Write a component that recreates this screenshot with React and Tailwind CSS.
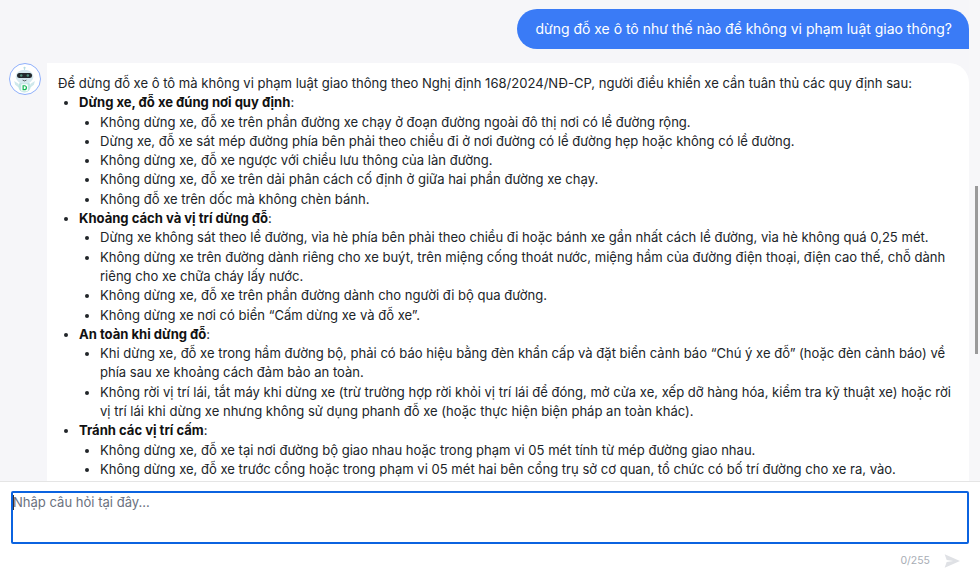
import React from 'react'

const sections = [
  {
    title: 'Dừng xe, đỗ xe đúng nơi quy định',
    items: [
      'Không dừng xe, đỗ xe trên phần đường xe chạy ở đoạn đường ngoài đô thị nơi có lề đường rộng.',
      'Dừng xe, đỗ xe sát mép đường phía bên phải theo chiều đi ở nơi đường có lề đường hẹp hoặc không có lề đường.',
      'Không dừng xe, đỗ xe ngược với chiều lưu thông của làn đường.',
      'Không dừng xe, đỗ xe trên dải phân cách cố định ở giữa hai phần đường xe chạy.',
      'Không đỗ xe trên dốc mà không chèn bánh.',
    ],
  },
  {
    title: 'Khoảng cách và vị trí dừng đỗ',
    items: [
      'Dừng xe không sát theo lề đường, vỉa hè phía bên phải theo chiều đi hoặc bánh xe gần nhất cách lề đường, vỉa hè không quá 0,25 mét.',
      'Không dừng xe trên đường dành riêng cho xe buýt, trên miệng cống thoát nước, miệng hầm của đường điện thoại, điện cao thế, chỗ dành riêng cho xe chữa cháy lấy nước.',
      'Không dừng xe, đỗ xe trên phần đường dành cho người đi bộ qua đường.',
      'Không dừng xe nơi có biển “Cấm dừng xe và đỗ xe”.',
    ],
  },
  {
    title: 'An toàn khi dừng đỗ',
    items: [
      'Khi dừng xe, đỗ xe trong hầm đường bộ, phải có báo hiệu bằng đèn khẩn cấp và đặt biển cảnh báo “Chú ý xe đỗ” (hoặc đèn cảnh báo) về phía sau xe khoảng cách đảm bảo an toàn.',
      'Không rời vị trí lái, tắt máy khi dừng xe (trừ trường hợp rời khỏi vị trí lái để đóng, mở cửa xe, xếp dỡ hàng hóa, kiểm tra kỹ thuật xe) hoặc rời vị trí lái khi dừng xe nhưng không sử dụng phanh đỗ xe (hoặc thực hiện biện pháp an toàn khác).',
    ],
  },
  {
    title: 'Tránh các vị trí cấm',
    items: [
      'Không dừng xe, đỗ xe tại nơi đường bộ giao nhau hoặc trong phạm vi 05 mét tính từ mép đường giao nhau.',
      'Không dừng xe, đỗ xe trước cổng hoặc trong phạm vi 05 mét hai bên cổng trụ sở cơ quan, tổ chức có bố trí đường cho xe ra, vào.',
    ],
  },
]

function BotAvatar() {
  return (
    <div className="w-8 h-8 shrink-0 rounded-full border border-[#8fb0fb] bg-white overflow-hidden">
      <svg viewBox="0 0 32 32" className="w-full h-full">
        <circle cx="15.5" cy="4" r="1.2" fill="#b5dce2" />
        <rect x="15" y="4.5" width="1" height="3" fill="#b5dce2" />
        <path d="M9 21 L4.5 18 L5.5 22 L10 25.5 Z" fill="#cfe8ec" />
        <path d="M22 21 L26.5 18 L25.5 22 L21 25.5 Z" fill="#cfe8ec" />
        <ellipse cx="15.5" cy="24" rx="6.5" ry="6.5" fill="#bfe5e2" />
        <ellipse cx="15.5" cy="13.5" rx="9.5" ry="7.5" fill="#d6e9ef" />
        <rect x="7.5" y="9.5" width="16" height="5.5" rx="2.7" fill="#23282c" />
        <circle cx="12" cy="12.2" r="1.3" fill="#4f8f7c" />
        <circle cx="19" cy="12.2" r="1.3" fill="#4f8f7c" />
        <path d="M13.5 17.2 Q15.5 18.8 17.5 17.2" stroke="#33383c" strokeWidth="0.8" fill="none" />
        <rect x="12" y="21.5" width="7" height="7.5" rx="1" fill="#ffffff" />
        <path d="M14 23.2 h1.4 a2.1 2.1 0 0 1 0 4.2 H14 Z" fill="none" stroke="#12b856" strokeWidth="1.3" />
      </svg>
    </div>
  )
}

export default function App() {
  return (
    <div className="h-screen w-full flex flex-col bg-white overflow-hidden font-['Inter',sans-serif] text-[13.05px] leading-[19.3px] text-[#212529]">
      <div className="relative flex-1 min-h-0 overflow-hidden bg-[#f6f6f9] pl-[9px] pr-[11px] pt-[9px]">
        <div className="flex justify-end">
          <div className="h-10 flex items-center pl-[18px] pr-[17px] rounded-t-[20px] rounded-bl-[20px] bg-[#3a7bf6] text-white text-[13.97px]">
            dừng đỗ xe ô tô như thế nào để không vi phạm luật giao thông?
          </div>
        </div>
        <div className="flex items-start gap-1.5 mt-[14px]">
          <BotAvatar />
          <div className="flex-1 bg-white rounded-tr-[20px] pl-[11px] pr-2 pt-[11px] pb-10">
            <p>Để dừng đỗ xe ô tô mà không vi phạm luật giao thông theo Nghị định 168/2024/NĐ-CP, người điều khiển xe cần tuân thủ các quy định sau:</p>
            <ul className="list-disc pl-[21px]">
              {sections.map((s) => (
                <li key={s.title}>
                  <strong className="font-bold text-[#111]">{s.title}</strong>:
                  <ul className="list-disc pl-[21px]">
                    {s.items.map((it) => (
                      <li key={it}>{it}</li>
                    ))}
                  </ul>
                </li>
              ))}
            </ul>
          </div>
        </div>
        {/* scrollbar */}
        <div className="absolute right-0 top-0 bottom-0 w-[11px] bg-[#f7f7f9]">
          <div className="absolute left-[6px] top-[186px] w-[2.5px] h-[168px] bg-[#9a9a9a]" />
        </div>
      </div>
      <div className="h-[89px] shrink-0 border-t border-[#e5e5e5] bg-white px-[11px] pt-[9px]">
        <div className="relative">
          <textarea
            placeholder="Nhập câu hỏi tại đây..."
            className="block w-full h-[53px] resize-none rounded-[2px] border-2 border-[#0b63e0] outline-none px-0 py-0 placeholder:text-[#6b7280]"
          />
          {/* text caret */}
          <span className="absolute left-[2px] top-[4px] w-px h-[15px] bg-[#333]" />
        </div>
        <div className="flex items-center justify-end gap-[14px] mt-[7px] pr-[9px]">
          <span className="text-[10.5px] text-[#a8adb5]">0/255</span>
          <svg viewBox="0 0 24 24" className="w-[16px] h-[16px]" fill="#dfe1e5">
            <path d="M1 2 L24 12 L1 22 L4 13.5 L14 12 L4 10.5 Z" />
          </svg>
        </div>
      </div>
    </div>
  )
}
